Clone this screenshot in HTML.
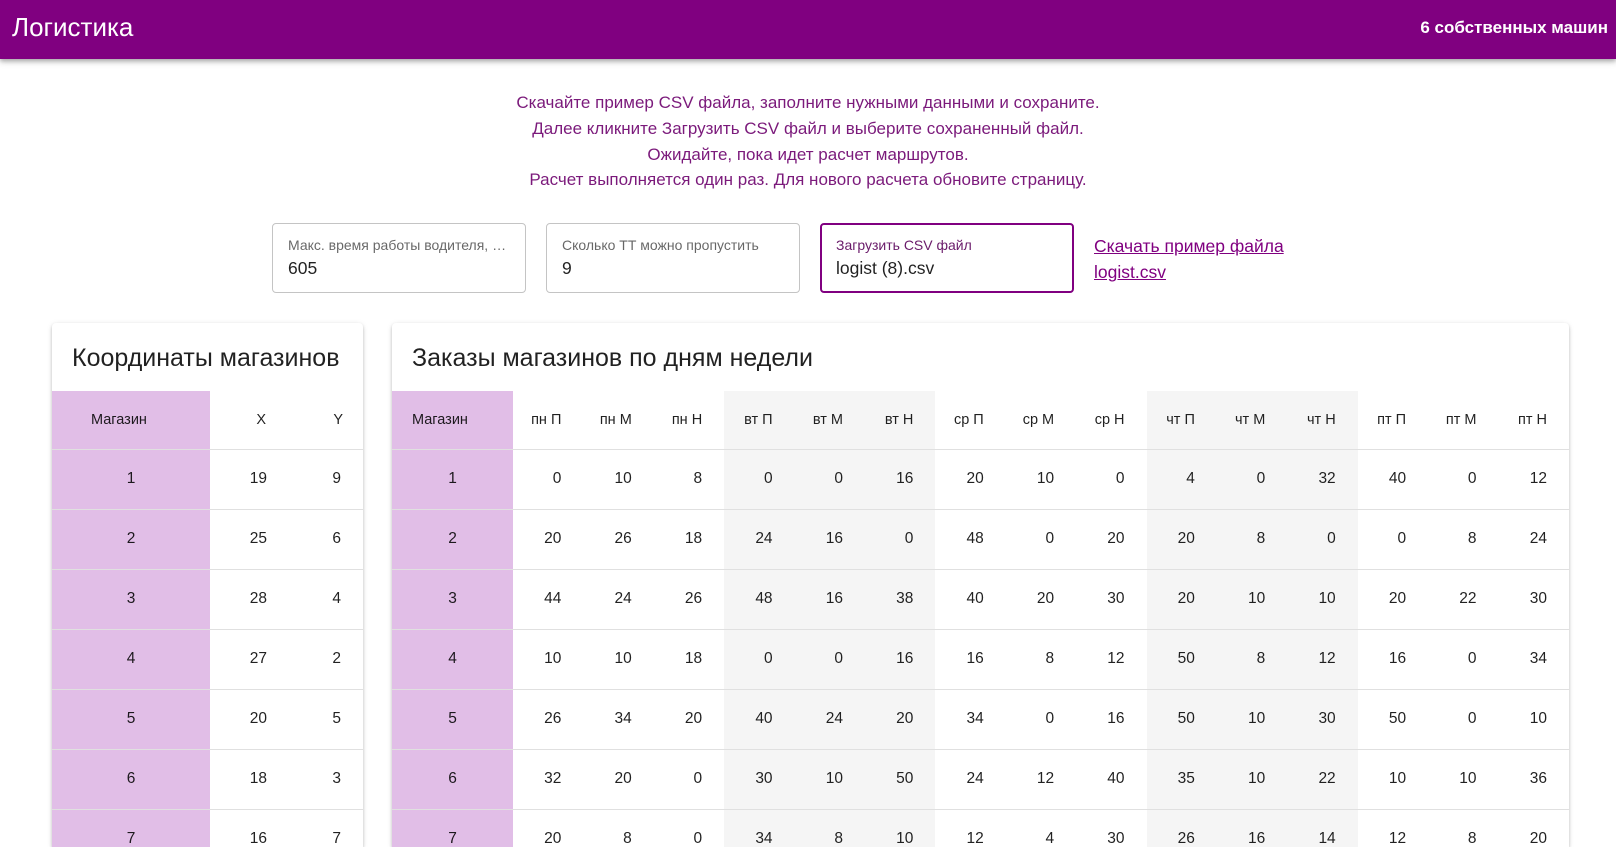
<!DOCTYPE html>
<html style="overflow:hidden;height:847px"><head><meta charset="utf-8"><style>
*{box-sizing:border-box;margin:0;padding:0}
body{width:1616px;height:847px;overflow:hidden;background:#fff;font-family:"Liberation Sans",Arial,sans-serif;color:rgba(0,0,0,.87);position:relative}
.hdr{position:absolute;left:0;top:0;width:1616px;height:59px;background:#800080;color:#fff;box-shadow:0 2px 4px rgba(0,0,0,.25),0 4px 6px rgba(0,0,0,.12)}
.hdr .t{position:absolute;left:12px;top:12px;font-size:26px}
.hdr .r{position:absolute;right:8px;top:18px;font-size:17px;font-weight:bold}
.info{position:absolute;left:0;width:1616px;top:90px;text-align:center;color:#7b1a7b;font-size:17px;line-height:25.8px}
.inp{position:absolute;top:223px;width:254px;height:70px;border:1px solid #c4c4c4;border-radius:4px;padding:0 15px}
.inp .l{font-size:14px;color:rgba(0,0,0,.6);margin-top:13px;white-space:nowrap;overflow:hidden;text-overflow:ellipsis}
.inp .v{font-size:17.5px;margin-top:5px}
.inp.f{border:2px solid #800080;padding:0 14px}
.inp.f .l{margin-top:12px;color:#6a1b6a}
.lnk{position:absolute;left:1094px;top:233px;color:#800080;text-decoration:underline;font-size:17.5px;line-height:26px}
.card{position:absolute;top:323px;height:524px;background:#fff;border-radius:4px 4px 0 0;box-shadow:0 2px 3px rgba(0,0,0,.2),0 1px 6px rgba(0,0,0,.1);overflow:hidden}
.card h2{font-weight:normal;font-size:25px;height:68px;padding-top:21px}
table{border-collapse:collapse;table-layout:fixed}
th{font-weight:normal;font-size:14.5px;height:58px;border-bottom:1px solid #e0e0e0;text-align:right;padding-right:22px}
td{font-size:15.5px;height:60px;border-bottom:1px solid #e0e0e0;text-align:right;padding-right:22px}
.m{background:#e1bee7;text-align:center;padding:0}
th.m{text-align:left}
.g{background:#f5f5f5}
</style></head><body>
<div class="hdr"><div class="t">Логистика</div><div class="r">6 собственных машин</div></div>
<div class="info">Скачайте пример CSV файла, заполните нужными данными и сохраните.<br>Далее кликните Загрузить CSV файл и выберите сохраненный файл.<br>Ожидайте, пока идет расчет маршрутов.<br>Расчет выполняется один раз. Для нового расчета обновите страницу.</div>
<div class="inp" style="left:272px"><div class="l">Макс. время работы водителя, мин</div><div class="v">605</div></div>
<div class="inp" style="left:546px"><div class="l">Сколько ТТ можно пропустить</div><div class="v">9</div></div>
<div class="inp f" style="left:820px"><div class="l">Загрузить CSV файл</div><div class="v">logist (8).csv</div></div>
<div class="lnk">Скачать пример файла<br>logist.csv</div>

<div class="card" style="left:52px;width:311px">
<h2 style="padding-left:20px">Координаты магазинов</h2>
<table style="width:311px"><colgroup><col style="width:158px"><col style="width:79px"><col style="width:74px"></colgroup>
<tr><th class="m" style="padding-left:39px">Магазин</th><th style="padding-right:23px">X</th><th style="padding-right:20px">Y</th></tr>
<tr><td class="m">1</td><td>19</td><td>9</td></tr>
<tr><td class="m">2</td><td>25</td><td>6</td></tr>
<tr><td class="m">3</td><td>28</td><td>4</td></tr>
<tr><td class="m">4</td><td>27</td><td>2</td></tr>
<tr><td class="m">5</td><td>20</td><td>5</td></tr>
<tr><td class="m">6</td><td>18</td><td>3</td></tr>
<tr><td class="m">7</td><td>16</td><td>7</td></tr>
</table></div>

<div class="card" style="left:392px;width:1177px">
<h2 style="padding-left:20px">Заказы магазинов по дням недели</h2>
<table style="width:1177px"><colgroup><col style="width:121px"><col span="15" style="width:70.4px"></colgroup>
<tr><th class="m" style="padding-left:20px">Магазин</th><th>пн П</th><th>пн М</th><th>пн Н</th><th class="g">вт П</th><th class="g">вт М</th><th class="g">вт Н</th><th>ср П</th><th>ср М</th><th>ср Н</th><th class="g">чт П</th><th class="g">чт М</th><th class="g">чт Н</th><th>пт П</th><th>пт М</th><th>пт Н</th></tr>
<tr><td class="m">1</td><td>0</td><td>10</td><td>8</td><td class="g">0</td><td class="g">0</td><td class="g">16</td><td>20</td><td>10</td><td>0</td><td class="g">4</td><td class="g">0</td><td class="g">32</td><td>40</td><td>0</td><td>12</td></tr>
<tr><td class="m">2</td><td>20</td><td>26</td><td>18</td><td class="g">24</td><td class="g">16</td><td class="g">0</td><td>48</td><td>0</td><td>20</td><td class="g">20</td><td class="g">8</td><td class="g">0</td><td>0</td><td>8</td><td>24</td></tr>
<tr><td class="m">3</td><td>44</td><td>24</td><td>26</td><td class="g">48</td><td class="g">16</td><td class="g">38</td><td>40</td><td>20</td><td>30</td><td class="g">20</td><td class="g">10</td><td class="g">10</td><td>20</td><td>22</td><td>30</td></tr>
<tr><td class="m">4</td><td>10</td><td>10</td><td>18</td><td class="g">0</td><td class="g">0</td><td class="g">16</td><td>16</td><td>8</td><td>12</td><td class="g">50</td><td class="g">8</td><td class="g">12</td><td>16</td><td>0</td><td>34</td></tr>
<tr><td class="m">5</td><td>26</td><td>34</td><td>20</td><td class="g">40</td><td class="g">24</td><td class="g">20</td><td>34</td><td>0</td><td>16</td><td class="g">50</td><td class="g">10</td><td class="g">30</td><td>50</td><td>0</td><td>10</td></tr>
<tr><td class="m">6</td><td>32</td><td>20</td><td>0</td><td class="g">30</td><td class="g">10</td><td class="g">50</td><td>24</td><td>12</td><td>40</td><td class="g">35</td><td class="g">10</td><td class="g">22</td><td>10</td><td>10</td><td>36</td></tr>
<tr><td class="m">7</td><td>20</td><td>8</td><td>0</td><td class="g">34</td><td class="g">8</td><td class="g">10</td><td>12</td><td>4</td><td>30</td><td class="g">26</td><td class="g">16</td><td class="g">14</td><td>12</td><td>8</td><td>20</td></tr>
</table></div>
</body></html>
